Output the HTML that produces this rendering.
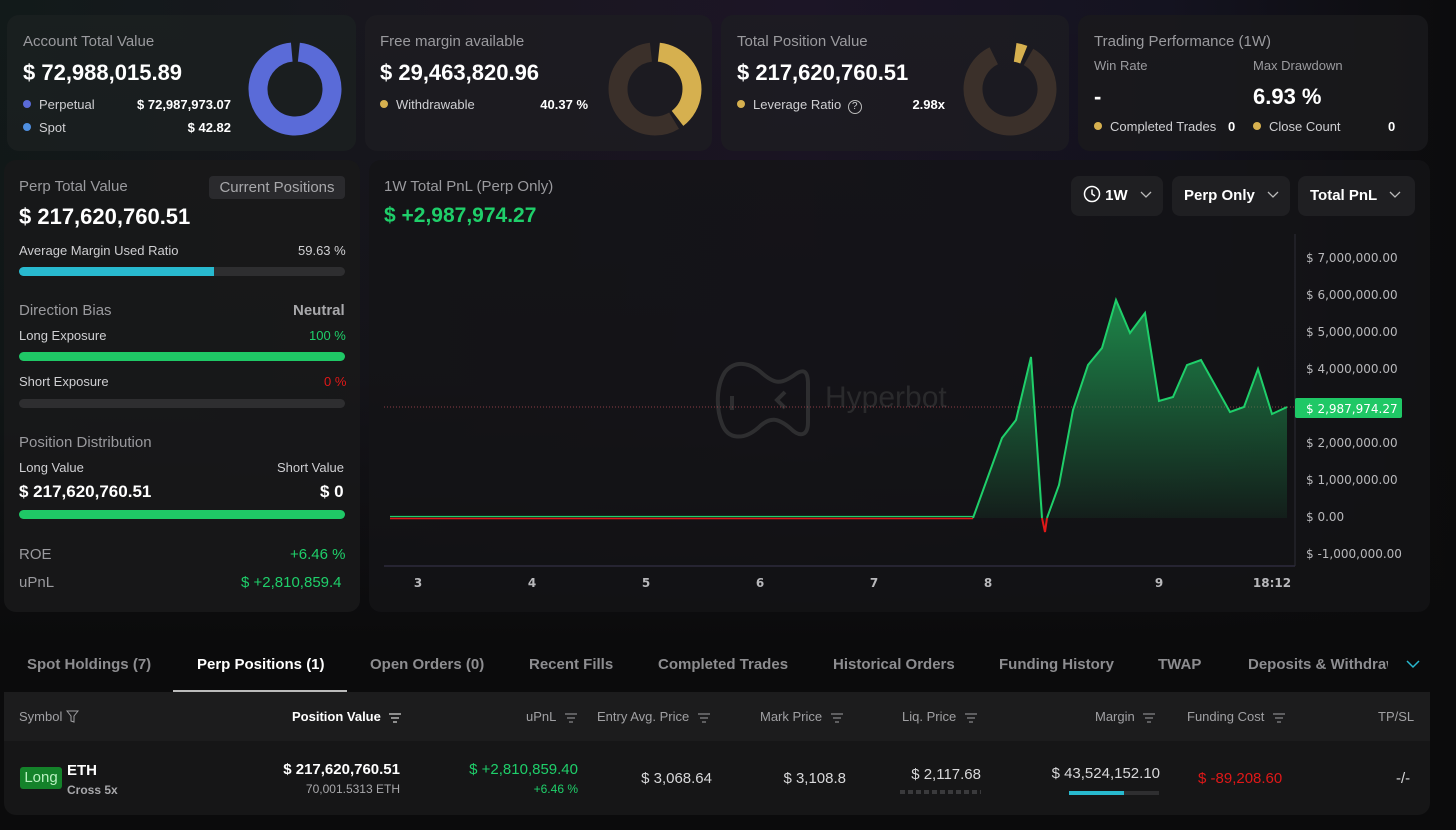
<!DOCTYPE html>
<html><head><meta charset="utf-8"><style>
*{box-sizing:border-box;margin:0;padding:0}
body{width:1456px;height:830px;overflow:hidden;background:#0b0b0c;font-family:"Liberation Sans",sans-serif;color:#fff;position:relative}
.bg{position:absolute;left:0;top:0;width:1456px;height:640px;background:linear-gradient(90deg,#121a1a 0%,#1a1620 35%,#1c1526 55%,#141320 80%,#0c0c0d 100%)}
.bg2{position:absolute;left:0;top:0;width:1456px;height:640px;background:linear-gradient(180deg,rgba(11,11,12,0) 0%,rgba(11,11,12,.3) 60%,#0b0b0c 100%)}
.card{position:absolute;background:rgba(30,30,34,.75);border-radius:12px}
.abs{position:absolute;white-space:nowrap}
.lbl{color:#9a9a9e;font-size:15px}
.big{font-weight:bold;font-size:22px}
.sm{font-size:13px;color:#cfcfd2}
.dot{display:inline-block;width:8px;height:8px;border-radius:50%;margin-right:8px;vertical-align:1px}
.bar{position:absolute;height:9px;border-radius:5px;background:#2e2e30}
.g{color:#1fcf6a}.r{color:#e01818}
.btn{position:absolute;top:176px;height:40px;background:#1f1f22;border-radius:8px;font-weight:bold;font-size:15px;line-height:40px;padding-left:12px;white-space:nowrap}
.tab{position:absolute;top:656px;font-size:15px;font-weight:bold;color:#8d8d90;white-space:nowrap}
.th{position:absolute;top:709px;font-size:13px;color:#a0a0a3;white-space:nowrap}
.fi{display:inline-block;width:12px;vertical-align:middle;margin-left:5px}
</style></head><body>
<div class="bg"></div><div class="bg2"></div>

<!-- top cards -->
<div class="card" style="left:7px;top:15px;width:349px;height:136px;background:rgba(28,32,32,.8)"></div>
<div class="abs lbl" style="left:23px;top:33px">Account Total Value</div>
<div class="abs big" style="left:23px;top:60px">$ 72,988,015.89</div>
<div class="abs sm" style="left:23px;top:97px"><span class="dot" style="background:#5a6bd8"></span>Perpetual</div>
<div class="abs sm" style="left:135px;top:97px;color:#fff;font-weight:bold;width:96px;text-align:right">$ 72,987,973.07</div>
<div class="abs sm" style="left:23px;top:120px"><span class="dot" style="background:#4f8fe0"></span>Spot</div>
<div class="abs sm" style="left:135px;top:120px;color:#fff;font-weight:bold;width:96px;text-align:right">$ 42.82</div>
<svg class="abs" style="left:245px;top:40px" width="100" height="100"><circle cx="50" cy="49" r="37" fill="none" stroke="#5a6bd8" stroke-width="19" stroke-dasharray="225 7.5" transform="rotate(-84 50 49)"/></svg>

<div class="card" style="left:365px;top:15px;width:347px;height:136px"></div>
<div class="abs lbl" style="left:380px;top:33px">Free margin available</div>
<div class="abs big" style="left:380px;top:60px">$ 29,463,820.96</div>
<div class="abs sm" style="left:380px;top:97px"><span class="dot" style="background:#d6b04f"></span>Withdrawable</div>
<div class="abs sm" style="left:540px;top:97px;color:#fff;font-weight:bold;width:48px;text-align:right">40.37 %</div>
<svg class="abs" style="left:605px;top:40px" width="100" height="100"><circle cx="50" cy="49" r="37" fill="none" stroke="#3b302a" stroke-width="19" stroke-dasharray="0 96 132 232" transform="rotate(-90 50 49)"/><circle cx="50" cy="49" r="37" fill="none" stroke="#d6b04f" stroke-width="19" stroke-dasharray="88 200" transform="rotate(-84 50 49)"/></svg>

<div class="card" style="left:721px;top:15px;width:348px;height:136px"></div>
<div class="abs lbl" style="left:737px;top:33px">Total Position Value</div>
<div class="abs big" style="left:737px;top:60px">$ 217,620,760.51</div>
<div class="abs sm" style="left:737px;top:97px"><span class="dot" style="background:#d6b04f"></span>Leverage Ratio <span style="display:inline-block;width:14px;height:14px;border:1px solid #bbb;border-radius:50%;font-size:10px;text-align:center;line-height:12px;margin-left:3px">?</span></div>
<div class="abs sm" style="left:900px;top:97px;color:#fff;font-weight:bold;width:45px;text-align:right">2.98x</div>
<svg class="abs" style="left:960px;top:40px" width="100" height="100"><circle cx="50" cy="49" r="37" fill="none" stroke="#3b302a" stroke-width="19" stroke-dasharray="196 40" transform="rotate(-60 50 49)"/><circle cx="50" cy="49" r="37" fill="none" stroke="#d6b04f" stroke-width="19" stroke-dasharray="9 250" transform="rotate(-82 50 49)"/></svg>

<div class="card" style="left:1078px;top:15px;width:350px;height:136px;background:rgba(26,26,28,.85)"></div>
<div class="abs lbl" style="left:1094px;top:33px">Trading Performance (1W)</div>
<div class="abs sm" style="left:1094px;top:58px;color:#9a9a9e">Win Rate</div>
<div class="abs sm" style="left:1253px;top:58px;color:#9a9a9e">Max Drawdown</div>
<div class="abs big" style="left:1094px;top:84px">-</div>
<div class="abs big" style="left:1253px;top:84px">6.93 %</div>
<div class="abs sm" style="left:1094px;top:119px"><span class="dot" style="background:#d6b04f"></span>Completed Trades</div>
<div class="abs sm" style="left:1228px;top:119px;color:#fff;font-weight:bold">0</div>
<div class="abs sm" style="left:1253px;top:119px"><span class="dot" style="background:#d6b04f"></span>Close Count</div>
<div class="abs sm" style="left:1388px;top:119px;color:#fff;font-weight:bold">0</div>

<!-- left panel -->
<div class="card" style="left:4px;top:160px;width:356px;height:452px;background:rgba(24,24,26,.9)"></div>
<div class="abs lbl" style="left:19px;top:178px">Perp Total Value</div>
<div class="abs" style="left:209px;top:176px;width:136px;height:23px;background:#2a2a2d;border-radius:4px;color:#a8a8ab;font-size:15px;text-align:center;line-height:23px">Current Positions</div>
<div class="abs big" style="left:19px;top:204px">$ 217,620,760.51</div>
<div class="abs sm" style="left:19px;top:243px">Average Margin Used Ratio</div>
<div class="abs sm" style="left:298px;top:243px">59.63 %</div>
<div class="bar" style="left:19px;top:267px;width:326px"></div>
<div class="bar" style="left:19px;top:267px;width:195px;background:#28b9cf;border-radius:5px 0 0 5px"></div>
<div class="abs lbl" style="left:19px;top:302px">Direction Bias</div>
<div class="abs" style="left:293px;top:302px;font-size:15px;font-weight:bold;color:#a8a8ab">Neutral</div>
<div class="abs sm" style="left:19px;top:328px">Long Exposure</div>
<div class="abs sm g" style="left:309px;top:328px">100 %</div>
<div class="bar" style="left:19px;top:352px;width:326px;background:#1fc866"></div>
<div class="abs sm" style="left:19px;top:374px">Short Exposure</div>
<div class="abs sm r" style="left:324px;top:374px">0 %</div>
<div class="bar" style="left:19px;top:399px;width:326px"></div>
<div class="abs lbl" style="left:19px;top:434px">Position Distribution</div>
<div class="abs sm" style="left:19px;top:460px">Long Value</div>
<div class="abs sm" style="left:277px;top:460px">Short Value</div>
<div class="abs" style="left:19px;top:482px;font-size:17px;font-weight:bold">$ 217,620,760.51</div>
<div class="abs" style="left:320px;top:482px;font-size:17px;font-weight:bold">$ 0</div>
<div class="bar" style="left:19px;top:510px;width:326px;background:#1fc866"></div>
<div class="abs lbl" style="left:19px;top:546px">ROE</div>
<div class="abs g" style="left:290px;top:546px;font-size:15px">+6.46 %</div>
<div class="abs lbl" style="left:19px;top:574px">uPnL</div>
<div class="abs g" style="left:241px;top:574px;font-size:15px">$ +2,810,859.4</div>

<!-- chart panel -->
<div class="card" style="left:369px;top:160px;width:1061px;height:452px;background:rgba(20,20,22,.8)"></div>
<div class="abs lbl" style="left:384px;top:178px">1W Total PnL (Perp Only)</div>
<div class="abs g" style="left:384px;top:204px;font-size:21px;font-weight:bold">$ +2,987,974.27</div>
<div class="btn" style="left:1071px;width:92px"><svg width="18" height="18" style="vertical-align:-3px"><circle cx="9" cy="9" r="7.5" fill="none" stroke="#fff" stroke-width="1.5"/><path d="M9 4.5V9L12 11" fill="none" stroke="#fff" stroke-width="1.5"/></svg> 1W <svg width="12" height="8" style="margin-left:8px;vertical-align:1px"><path d="M1 1L6 6L11 1" fill="none" stroke="#bbb" stroke-width="1.3"/></svg></div>
<div class="btn" style="left:1172px;width:118px">Perp Only <svg width="12" height="8" style="margin-left:8px;vertical-align:1px"><path d="M1 1L6 6L11 1" fill="none" stroke="#bbb" stroke-width="1.3"/></svg></div>
<div class="btn" style="left:1298px;width:117px">Total PnL <svg width="12" height="8" style="margin-left:8px;vertical-align:1px"><path d="M1 1L6 6L11 1" fill="none" stroke="#bbb" stroke-width="1.3"/></svg></div>

<svg class="abs" style="left:0;top:0" width="1456" height="620">
<defs><linearGradient id="gf" x1="0" y1="300" x2="0" y2="520" gradientUnits="userSpaceOnUse"><stop offset="0" stop-color="#1f9a52" stop-opacity=".85"/><stop offset="1" stop-color="#1f9a52" stop-opacity=".08"/></linearGradient></defs>
<g fill="none" stroke="#2e2e30" stroke-width="4"><path d="M725 372c10-12 25-10 38 2c12 10 18 10 30 2c10-8 15-6 15 8v38c0 14-8 16-18 6c-12-10-20-12-32 0c-14 12-30 12-36-4c-6-16-6-38 3-52z"/><path d="M732 396v14M785 392l-8 8l8 8"/></g>
<text x="825" y="407" font-family="Liberation Sans" font-size="30" fill="#2a2a2c">Hyperbot</text>
<line x1="384" y1="407" x2="1295" y2="407" stroke="#c0505a" stroke-width="1" stroke-dasharray="1 2" opacity=".7"/>
<line x1="1295" y1="234" x2="1295" y2="566" stroke="#2c2c35"/>
<line x1="384" y1="566" x2="1295" y2="566" stroke="#2c2b3c" stroke-width="1.5"/>
<path d="M973 518L1002 438L1016 420L1031 357L1045 532L1059 485L1073 410L1088 365L1102 348L1116 300L1130 333L1145 313L1159 401L1173 397L1187 365L1201 360L1230 412L1244 407L1258 369L1272 414L1287 407L1287 518Z" fill="url(#gf)"/>
<line x1="390" y1="516.5" x2="973" y2="516.5" stroke="#1fcf6a" stroke-width="1.2"/>
<line x1="390" y1="518.5" x2="973" y2="518.5" stroke="#e01818" stroke-width="1.5"/>
<path d="M973 518L1002 438L1016 420L1031 357L1042 518M1047 518L1059 485L1073 410L1088 365L1102 348L1116 300L1130 333L1145 313L1159 401L1173 397L1187 365L1201 360L1230 412L1244 407L1258 369L1272 414L1287 407" fill="none" stroke="#1fcf6a" stroke-width="2"/>
<path d="M1042 518L1045 532L1047 518" fill="none" stroke="#e01818" stroke-width="2"/>
<g font-family="DejaVu Sans" font-size="12" fill="#b8b8bb">
<text x="1306" y="262">$ 7,000,000.00</text><text x="1306" y="299">$ 6,000,000.00</text><text x="1306" y="336">$ 5,000,000.00</text><text x="1306" y="373">$ 4,000,000.00</text><text x="1306" y="447">$ 2,000,000.00</text><text x="1306" y="484">$ 1,000,000.00</text><text x="1306" y="521">$ 0.00</text><text x="1306" y="558">$ -1,000,000.00</text>
</g>
<rect x="1295" y="398" width="107" height="20" rx="2" fill="#1fc866"/>
<text x="1306" y="413" font-family="DejaVu Sans" font-size="12" fill="#fff">$ 2,987,974.27</text>
<g font-family="DejaVu Sans" font-size="12" fill="#b8b8bb" font-weight="bold" text-anchor="middle">
<text x="418" y="587">3</text><text x="532" y="587">4</text><text x="646" y="587">5</text><text x="760" y="587">6</text><text x="874" y="587">7</text><text x="988" y="587">8</text><text x="1159" y="587">9</text><text x="1272" y="587">18:12</text>
</g>
</svg>

<!-- tabs -->
<div class="tab" style="left:27px">Spot Holdings (7)</div>
<div class="tab" style="left:197px;color:#fff">Perp Positions (1)</div>
<div class="abs" style="left:173px;top:690px;width:174px;height:2px;background:#bbb"></div>
<div class="tab" style="left:370px">Open Orders (0)</div>
<div class="tab" style="left:529px">Recent Fills</div>
<div class="tab" style="left:658px">Completed Trades</div>
<div class="tab" style="left:833px">Historical Orders</div>
<div class="tab" style="left:999px">Funding History</div>
<div class="tab" style="left:1158px">TWAP</div>
<div class="tab" style="left:1248px;width:140px;overflow:hidden">Deposits &amp; Withdrawals</div>
<svg class="abs" style="left:1406px;top:660px" width="14" height="9"><path d="M1 1L7 7L13 1" fill="none" stroke="#28b9cf" stroke-width="1.5"/></svg>

<!-- table -->
<div class="abs" style="left:4px;top:692px;width:1426px;height:123px;background:#161617;border-radius:0 0 12px 12px"></div>
<div class="abs" style="left:4px;top:692px;width:1426px;height:49px;background:#1c1c1d"></div>
<div class="th" style="left:19px">Symbol <svg width="13" height="13" style="vertical-align:-2px"><path d="M1 1H12L8 6V12L5 11V6Z" fill="none" stroke="#a0a0a3"/></svg></div>
<div class="th" style="left:292px;color:#fff;font-weight:bold">Position Value <svg class="fi" height="10"><path d="M0 1H12M2 5H10M4 9H8" stroke="#fff"/></svg></div>
<div class="th" style="left:526px">uPnL <svg class="fi" height="10"><path d="M0 1H12M2 5H10M4 9H8" stroke="#a0a0a3"/></svg></div>
<div class="th" style="left:597px">Entry Avg. Price <svg class="fi" height="10"><path d="M0 1H12M2 5H10M4 9H8" stroke="#a0a0a3"/></svg></div>
<div class="th" style="left:760px">Mark Price <svg class="fi" height="10"><path d="M0 1H12M2 5H10M4 9H8" stroke="#a0a0a3"/></svg></div>
<div class="th" style="left:902px">Liq. Price <svg class="fi" height="10"><path d="M0 1H12M2 5H10M4 9H8" stroke="#a0a0a3"/></svg></div>
<div class="th" style="left:1095px">Margin <svg class="fi" height="10"><path d="M0 1H12M2 5H10M4 9H8" stroke="#a0a0a3"/></svg></div>
<div class="th" style="left:1187px">Funding Cost <svg class="fi" height="10"><path d="M0 1H12M2 5H10M4 9H8" stroke="#a0a0a3"/></svg></div>
<div class="th" style="left:1378px">TP/SL</div>

<div class="abs" style="left:20px;top:767px;width:42px;height:22px;background:#14822a;border-radius:3px;color:#b8f0c0;font-size:15px;text-align:center;line-height:22px">Long</div>
<div class="abs" style="left:67px;top:762px;font-size:15px;font-weight:bold">ETH</div>
<div class="abs" style="left:67px;top:783px;font-size:12px;color:#a8a8ab;font-weight:bold">Cross 5x</div>
<div class="abs" style="left:278px;top:761px;font-size:15px;font-weight:bold;width:122px;text-align:right">$ 217,620,760.51</div>
<div class="abs" style="left:278px;top:782px;font-size:12px;color:#a8a8ab;width:122px;text-align:right">70,001.5313 ETH</div>
<div class="abs g" style="left:440px;top:761px;font-size:15px;width:138px;text-align:right">$ +2,810,859.40</div>
<div class="abs g" style="left:440px;top:782px;font-size:12px;width:138px;text-align:right">+6.46 %</div>
<div class="abs" style="left:612px;top:770px;font-size:15px;color:#d8d8da;width:100px;text-align:right">$ 3,068.64</div>
<div class="abs" style="left:746px;top:770px;font-size:15px;color:#d8d8da;width:100px;text-align:right">$ 3,108.8</div>
<div class="abs" style="left:880px;top:766px;font-size:15px;color:#d8d8da;width:101px;text-align:right">$ 2,117.68</div>
<div class="abs" style="left:900px;top:790px;width:81px;height:4px;background:repeating-linear-gradient(90deg,#3a3a3c 0 5px,transparent 5px 8px)"></div>
<div class="abs" style="left:1040px;top:765px;font-size:15px;color:#d8d8da;width:120px;text-align:right">$ 43,524,152.10</div>
<div class="abs" style="left:1069px;top:791px;width:90px;height:4px;background:#2e2e30"></div>
<div class="abs" style="left:1069px;top:791px;width:55px;height:4px;background:#28b9cf"></div>
<div class="abs r" style="left:1198px;top:770px;font-size:15px">$ -89,208.60</div>
<div class="abs" style="left:1396px;top:770px;font-size:15px;color:#d8d8da">-/-</div>
</body></html>
